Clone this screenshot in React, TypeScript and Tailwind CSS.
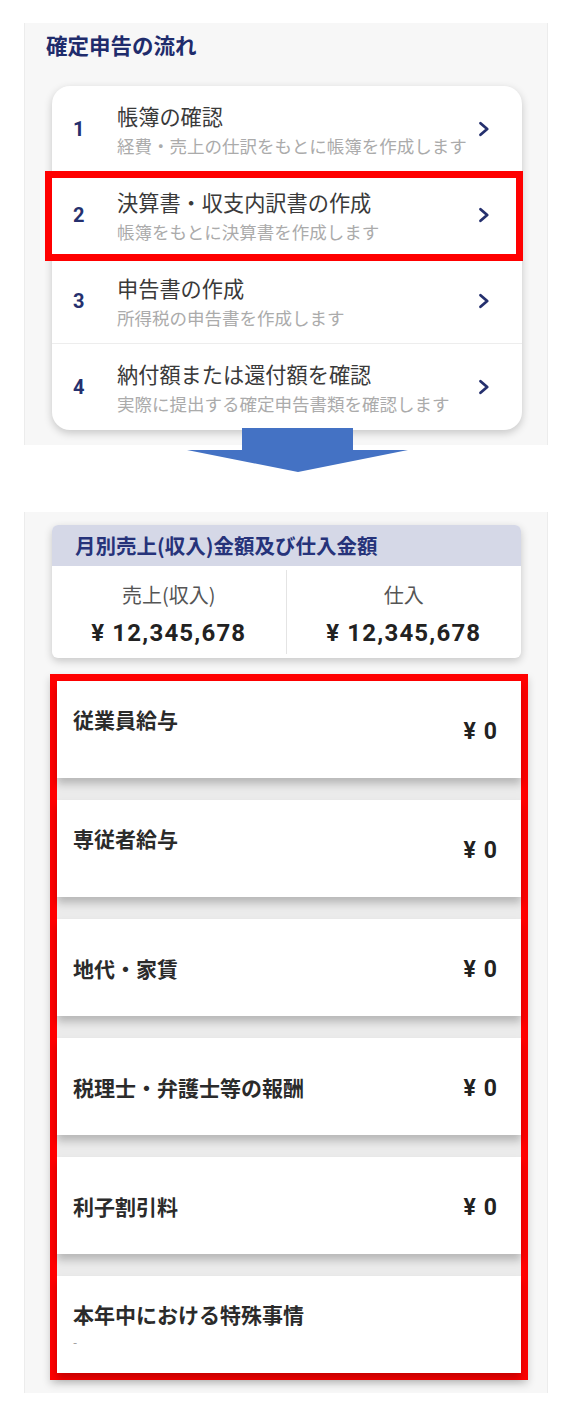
import React from "react";

const steps = [
  { n: "1", title: "帳簿の確認", sub: "経費・売上の仕訳をもとに帳簿を作成します" },
  { n: "2", title: "決算書・収支内訳書の作成", sub: "帳簿をもとに決算書を作成します" },
  { n: "3", title: "申告書の作成", sub: "所得税の申告書を作成します" },
  { n: "4", title: "納付額または還付額を確認", sub: "実際に提出する確定申告書類を確認します" },
];

type Item = { label: string; amount?: string; top?: boolean; dash?: boolean };

const items: Item[] = [
  { label: "従業員給与", amount: "0", top: true },
  { label: "専従者給与", amount: "0", top: true },
  { label: "地代・家賃", amount: "0" },
  { label: "税理士・弁護士等の報酬", amount: "0" },
  { label: "利子割引料", amount: "0" },
  { label: "本年中における特殊事情", top: true, dash: true },
];

function Chevron() {
  return (
    <svg width="12" height="16" viewBox="0 0 12 16" className="shrink-0">
      <path
        d="M2.5 2.2 L9.2 8 L2.5 13.8"
        fill="none"
        stroke="#25306e"
        strokeWidth="2.8"
        strokeLinecap="round"
        strokeLinejoin="round"
      />
    </svg>
  );
}

export default function App() {
  return (
    <div className="relative w-[570px] h-[1419px] bg-white font-['Noto_Sans_CJK_JP','Noto_Sans',sans-serif] overflow-hidden">
      {/* Top panel */}
      <div className="ml-[24px] mt-[23px] w-[524px] h-[422px] bg-[#f7f7f7] border-x border-[#ececec] overflow-hidden">
        <div className="pl-[21px] pt-[8px] text-[21.5px] leading-[28px] font-bold text-[#1f2c6c]">
          確定申告の流れ
        </div>
        <div className="ml-[27px] mt-[27px] w-[470px] bg-white rounded-[18px] shadow-[0_3px_8px_rgba(0,0,0,0.2)] divide-y divide-[#ededed]">
          {steps.map((s) => (
            <div key={s.n} className="h-[86px] flex items-center pl-[21px] pr-[32px]">
              <div className="w-[44px] shrink-0 text-[20px] font-bold text-[#25306e] font-['Roboto','Noto_Sans',sans-serif]">
                {s.n}
              </div>
              <div className="flex-1 self-start pt-[16px]">
                <div className="text-[21.2px] leading-[28px] text-[#3a3a3a] whitespace-nowrap">{s.title}</div>
                <div className="mt-[2px] text-[17.5px] leading-[28px] text-[#ababab] whitespace-nowrap">{s.sub}</div>
              </div>
              <Chevron />
            </div>
          ))}
        </div>
      </div>

      {/* Red highlight over step 2 */}
      <div className="absolute left-[45px] top-[171px] w-[478px] h-[90px] border-[7px] border-[#ff0000]" />

      {/* Arrow */}
      <svg
        className="absolute left-[187px] top-[428px]"
        width="222"
        height="45"
        viewBox="0 0 222 45"
      >
        <polygon points="55,0 166,0 166,22 221,22 111,44 0,22 55,22" fill="#4472c4" />
      </svg>

      {/* Bottom panel */}
      <div className="ml-[24px] mt-[67px] w-[524px] h-[881px] bg-[#f7f7f7] border-x border-[#ececec] overflow-hidden">
        <div className="ml-[27px] mt-[13px] w-[469px] bg-white rounded-[6px] shadow-[0_3px_8px_rgba(0,0,0,0.2)] overflow-hidden">
          <div className="h-[41px] bg-[#d5d8e7] flex items-center pl-[23px] text-[20.5px] font-bold text-[#26337a] whitespace-nowrap">
            月別売上(収入)金額及び仕入金額
          </div>
          <div className="grid grid-cols-2 h-[92px]">
            <div className="my-[4px] border-r border-[#e4e4e4] flex flex-col items-center pt-[11px]">
              <div className="text-[20px] leading-[28px] text-[#555]">売上(収入)</div>
              <div className="mt-[8px] text-[24px] leading-[32px] font-bold text-[#222] tracking-[1.2px] font-['Roboto','Noto_Sans',sans-serif]">
                ¥ 12,345,678
              </div>
            </div>
            <div className="my-[4px] flex flex-col items-center pt-[11px]">
              <div className="text-[20px] leading-[28px] text-[#555]">仕入</div>
              <div className="mt-[8px] text-[24px] leading-[32px] font-bold text-[#222] tracking-[1.2px] font-['Roboto','Noto_Sans',sans-serif]">
                ¥ 12,345,678
              </div>
            </div>
          </div>
        </div>

        <div className="ml-[25px] mt-[16px] w-[478px] border-[7px] border-[#ff0000] bg-[#ebebeb] flex flex-col gap-[22px] shadow-[0_4px_8px_rgba(0,0,0,0.18)]">
          {items.map((it) => (
            <div
              key={it.label}
              className="h-[97px] bg-white flex items-center justify-between pl-[16px] pr-[24px] shadow-[0_6px_8px_rgba(0,0,0,0.22)]"
            >
              <div className={it.top ? "self-start mt-[24px]" : ""}>
                <div className="text-[21px] leading-[28px] font-bold text-[#2b2b2b] whitespace-nowrap">{it.label}</div>
                {it.dash && <div className="mt-[6px] text-[12px] leading-[16px] text-[#999]">-</div>}
              </div>
              {it.amount && (
                <div className="mt-[4px] flex items-baseline gap-[8px] text-[23px] leading-[28px] font-bold text-[#222] font-['Roboto','Noto_Sans',sans-serif]">
                  <span>¥</span>
                  <span>{it.amount}</span>
                </div>
              )}
            </div>
          ))}
        </div>
      </div>
    </div>
  );
}
